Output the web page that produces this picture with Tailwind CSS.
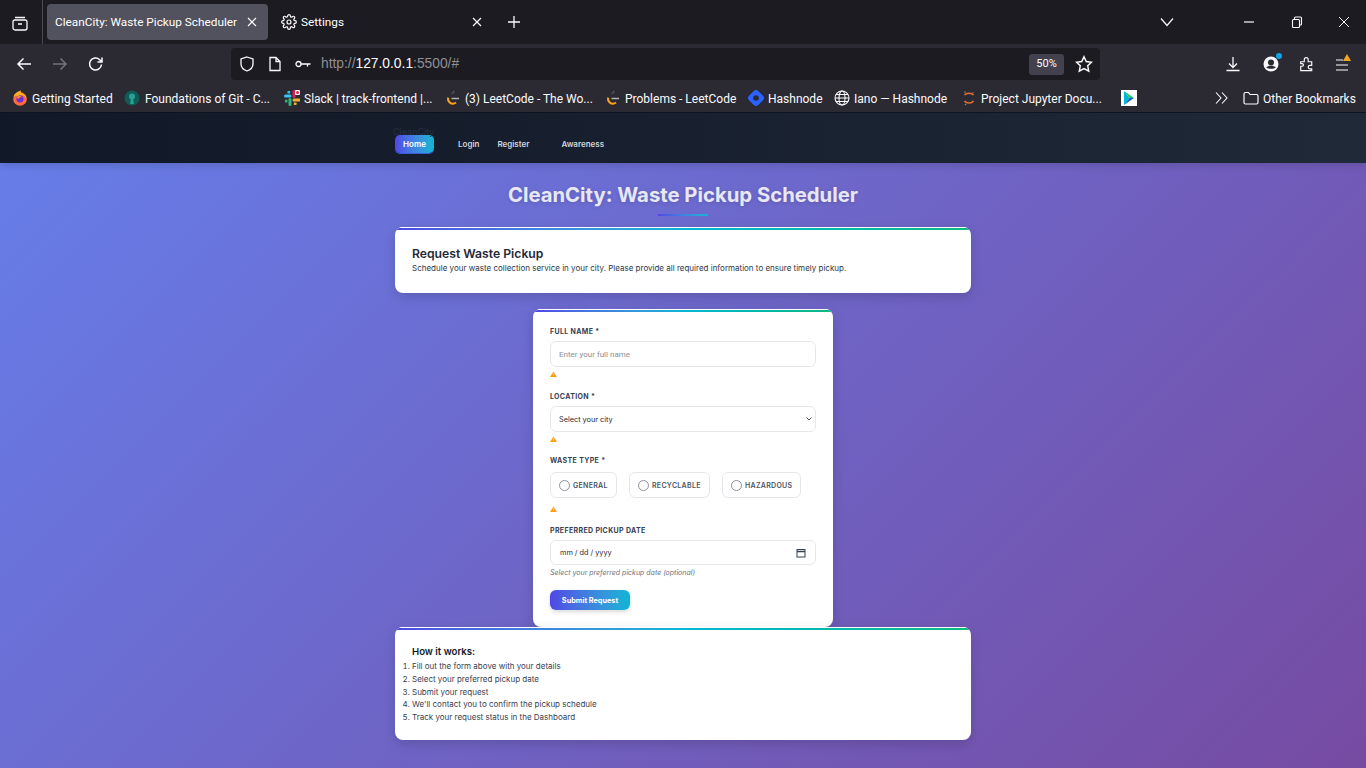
<!DOCTYPE html>
<html lang="en">
  <head>
    <meta charset="UTF-8" />
    <title>CleanCity: Waste Pickup Scheduler</title>
    <script src="https://cdn.jsdelivr.net/npm/@tailwindcss/browser@4"></script>
  </head>
  <body class="w-[1366px] h-[768px] overflow-hidden font-['Inter',sans-serif]">
    <!-- browser chrome -->
    <div class="h-[44px] bg-[#1c1b22] flex items-center text-white font-['Roboto',sans-serif]">
      <div class="w-[43px] h-full flex items-center justify-center border-r border-[#4a4a52] shrink-0">
        <svg class="w-[16px] h-[16px] mt-[1px] -ml-[3px]" viewBox="0 0 16 16" fill="none" stroke="#fbfbfe" stroke-width="1.3"><rect x="1" y="5" width="14" height="10" rx="2"/><path d="M3 2.500h10M6 9h4"/></svg>
      </div>
      <div class="ml-[4px] w-[221px] h-[36px] bg-[#52525e] rounded-[4px] flex items-center pl-[8px] text-[11.8px] whitespace-nowrap shrink-0">
        <span class="w-[182px] pt-[2px]">CleanCity: Waste Pickup Scheduler</span>
        <svg class="w-[10px] h-[10px] ml-[10px] shrink-0" viewBox="0 0 10 10" stroke="#fbfbfe" stroke-width="1.2"><path d="M1 1l8 8M9 1l-8 8"/></svg>
      </div>
      <div class="w-[220px] h-[36px] flex items-center pl-[13px] text-[11.8px] shrink-0">
        <svg class="w-[16px] h-[16px] mr-[4px] shrink-0" viewBox="0 0 24 24" fill="none" stroke="#fbfbfe" stroke-width="1.8"><circle cx="12" cy="12" r="3"/><path d="M19.400 15a1.700 1.700 0 0 0 .3 1.800l.1.1a2 2 0 1 1-2.800 2.800l-.1-.1a1.700 1.700 0 0 0-2.900 1.200V21a2 2 0 1 1-4 0v-.1a1.700 1.700 0 0 0-2.900-1.200l-.1.1a2 2 0 1 1-2.800-2.800l.1-.1a1.700 1.700 0 0 0-1.200-2.900H3a2 2 0 1 1 0-4h.1a1.700 1.700 0 0 0 1.200-2.900l-.1-.1a2 2 0 1 1 2.800-2.800l.1.1a1.700 1.700 0 0 0 1.900.3H9a1.700 1.700 0 0 0 1-1.500V3a2 2 0 1 1 4 0v.1a1.700 1.700 0 0 0 2.900 1.200l.1-.1a2 2 0 1 1 2.800 2.800l-.1.1a1.700 1.700 0 0 0 1.200 2.900h.1a2 2 0 1 1 0 4h-.1a1.700 1.700 0 0 0-1.500 1z"/></svg>
        <span class="pt-[2px]">Settings</span>
        <svg class="w-[10px] h-[10px] ml-auto mr-[6px] shrink-0" viewBox="0 0 10 10" stroke="#fbfbfe" stroke-width="1.2"><path d="M1 1l8 8M9 1l-8 8"/></svg>
      </div>
      <svg class="w-[14px] h-[14px] ml-[19px] shrink-0" viewBox="0 0 14 14" stroke="#fbfbfe" stroke-width="1.3"><path d="M7 1v12M1 7h12"/></svg>
      <svg class="w-[14px] h-[10px] ml-[639px] shrink-0" viewBox="0 0 14 10" fill="none" stroke="#fbfbfe" stroke-width="1.2"><path d="M1 1.500l6 7 6-7"/></svg>
      <svg class="w-[12px] h-[12px] ml-[69px] shrink-0" viewBox="0 0 12 12" stroke="#fbfbfe" stroke-width="1.2"><path d="M1 6h10"/></svg>
      <svg class="w-[12px] h-[12px] ml-[36px] shrink-0" viewBox="0 0 12 12" fill="none" stroke="#fbfbfe" stroke-width="1.1"><rect x="1.500" y="3.500" width="7" height="8" rx="1"/><path d="M3.500 3.500V2a1 1 0 0 1 1-1h5a1 1 0 0 1 1 1v6a1 1 0 0 1-1 1H8.500"/></svg>
      <svg class="w-[12px] h-[12px] ml-[35px] shrink-0" viewBox="0 0 12 12" stroke="#fbfbfe" stroke-width="1"><path d="M1 1l10 10M11 1L1 11"/></svg>
    </div>
    <div class="h-[40px] bg-[#2b2a33] flex items-center text-white">
      <svg class="w-[16px] h-[16px] ml-[16px] shrink-0" viewBox="0 0 16 16" fill="none" stroke="#fbfbfe" stroke-width="1.5"><path d="M15 8H2M7.500 2.500L2 8l5.500 5.500"/></svg>
      <svg class="w-[16px] h-[16px] ml-[20px] shrink-0" viewBox="0 0 16 16" fill="none" stroke="#73737b" stroke-width="1.5"><path d="M1 8h13M8.500 2.500L14 8l-5.500 5.500"/></svg>
      <svg class="w-[16px] h-[16px] ml-[20px] shrink-0" viewBox="0 0 16 16" fill="none" stroke="#fbfbfe" stroke-width="1.5"><path d="M13.500 8.500a6 6 0 1 1-1.800-4.800L14 6M14 1.500V6H9.500"/></svg>
      <div class="ml-[127px] w-[869px] h-[32px] bg-[#1c1b22] rounded-[4px] flex items-center pl-[8px] font-['Liberation_Sans',sans-serif] text-[13.8px] text-[#8f8f94] shrink-0">
        <svg class="w-[16px] h-[16px] shrink-0" viewBox="0 0 16 16" fill="none" stroke="#fbfbfe" stroke-width="1.3"><path d="M8 1l6 2v5c0 3.500-2.500 5.700-6 7-3.500-1.300-6-3.500-6-7V3z"/></svg>
        <svg class="w-[14px] h-[16px] ml-[13px] shrink-0" viewBox="0 0 14 16" fill="none" stroke="#fbfbfe" stroke-width="1.3"><path d="M2 1.500h6l4 4V14.500H2zM8 1.500V5.500h4"/></svg>
        <svg class="w-[16px] h-[10px] ml-[13px] shrink-0" viewBox="0 0 16 10" fill="none" stroke="#fbfbfe" stroke-width="1.3"><circle cx="3.500" cy="5" r="2.500"/><path d="M6 5h9.500M12.500 5v2.500"/></svg>
        <span class="ml-[10px] pt-[1px]">http://<span class="text-[#fbfbfe]">127.0.0.1</span>:5500/#</span>
        <div class="ml-auto w-[35px] h-[21px] bg-[#42414d] rounded-[3px] flex items-center justify-center text-[11px] text-[#fbfbfe] font-['Roboto',sans-serif]">50%</div>
        <svg class="w-[18px] h-[18px] ml-[11px] mr-[7px] shrink-0" viewBox="0 0 16 16" fill="none" stroke="#fbfbfe" stroke-width="1.3"><path d="M8 1.500l2 4.300 4.700.6-3.400 3.200.9 4.700L8 12l-4.200 2.300.9-4.700L1.300 6.400 6 5.800z"/></svg>
      </div>
      <svg class="w-[16px] h-[16px] ml-[125px] shrink-0" viewBox="0 0 16 16" fill="none" stroke="#fbfbfe" stroke-width="1.3"><path d="M8 1v10M4 7.500L8 11.500l4-4M1.500 14.500h13"/></svg>
      <div class="relative ml-[22px] w-[16px] h-[16px] shrink-0">
        <svg class="w-[16px] h-[16px]" viewBox="0 0 16 16"><circle cx="8" cy="8" r="7.500" fill="#fbfbfe"/><circle cx="8" cy="6.500" r="3" fill="#2b2a33"/><path d="M3.200 11.500C5 9.300 11 9.300 12.800 11.500 11 13.300 5 13.300 3.200 11.500z" fill="#2b2a33"/></svg>
        <span class="absolute -top-[3px] -right-[3px] w-[6px] h-[6px] rounded-full bg-[#0ea5e9]"></span>
      </div>
      <svg class="w-[15px] h-[16px] ml-[20px] shrink-0" viewBox="0 0 16 18" fill="none" stroke="#fbfbfe" stroke-width="1.3"><path d="M1.500 6.500h4V4a2.200 2.200 0 0 1 4.400 0v2.500h4v4h-2a2 2 0 0 0 0 4h2v2H1.500v-5H3a1.500 1.500 0 0 0 0-3H1.500z"/></svg>
      <div class="relative ml-[22px] w-[12px] h-[12px] mt-[2px] shrink-0">
        <svg class="w-[12px] h-[12px]" viewBox="0 0 12 12" stroke="#fbfbfe" stroke-width="1.2"><path d="M0 1h7M0 6h12M0 11h12"/></svg>
        <span class="absolute -top-[5px] -right-[3px] w-0 h-0 border-l-[4px] border-r-[4px] border-b-[7px] border-l-transparent border-r-transparent border-b-[#f5a623]"></span>
      </div>
    </div>
    <div class="h-[28px] bg-[#2b2a33] flex items-center text-[#fbfbfe] text-[12px] whitespace-nowrap font-['Roboto',sans-serif]">
      <svg class="w-[16px] h-[16px] ml-[12px] mr-[4px] shrink-0" viewBox="0 0 16 16"><circle cx="8" cy="9" r="6.800" fill="#ff6b3d"/><path d="M1.500 7C2 4 5 1.500 9 .5c-.5 1.500 0 2 1 2.500 2.500 1 4.500 3 4.700 6C13 5.500 9 4 6 6 4 5.500 2.500 6 1.500 7z" fill="#ffb01f"/><circle cx="8" cy="9" r="3.600" fill="#6b2fd9"/><path d="M5 7c1.500-1.500 4-1 5 .5C8.500 7 6.500 7.500 6.500 9 5.500 8.500 5 8 5 7z" fill="#ff9a2e"/></svg>
      <span class="w-[81px] pt-[2px]">Getting Started</span>
      <svg class="w-[16px] h-[16px] ml-[11px] mr-[5px] shrink-0" viewBox="0 0 16 16"><circle cx="8" cy="8" r="7.500" fill="#0f5c56"/><circle cx="8" cy="6.500" r="3" fill="#2aa198"/><path d="M6.800 8h2.400l.6 6H6.200z" fill="#2aa198"/></svg>
      <span class="w-[126px] pt-[2px]">Foundations of Git - C...</span>
      <svg class="w-[16px] h-[16px] ml-[13px] mr-[4px] shrink-0" viewBox="0 0 16 16"><path d="M1.500 7.500h4.500a1.400 1.400 0 0 0 0-3H1.500a1.500 1.500 0 0 0 0 3z" fill="#36c5f0"/><path d="M4.500 1h1.700v2.500H4.500a1.250 1.250 0 0 1 0-2.500z" fill="#36c5f0"/><path d="M8.500 1.500v5a1.400 1.400 0 0 0 3 0v-5a1.500 1.500 0 0 0-3 0z" fill="#e01e5a"/><rect x="11" y="0" width="5" height="5" rx="1" fill="#fff"/><rect x="12" y="1" width="3" height="3" rx="1.500" fill="#e01e5a"/><path d="M15 8.500h-5a1.400 1.400 0 0 0 0 3h5a1.500 1.500 0 0 0 0-3z" fill="#ecb22e"/><path d="M11.500 15H9.800v-2.500h1.700a1.250 1.250 0 0 1 0 2.500z" fill="#ecb22e"/><path d="M7.500 14.500v-5a1.400 1.400 0 0 0-3 0v5a1.500 1.500 0 0 0 3 0z" fill="#2eb67d"/><path d="M1 11.500V9.800h2.500v1.700a1.250 1.250 0 0 1-2.500 0z" fill="#2eb67d"/></svg>
      <span class="w-[129px] pt-[2px]">Slack | track-frontend |...</span>
      <svg class="w-[16px] h-[16px] ml-[12px] mr-[4px] shrink-0" viewBox="0 0 16 16" fill="none" stroke-width="2"><path d="M9.500 1L3.500 7.500" stroke="#4a4a4a"/><path d="M3.500 7.500c-1 1.500-.5 3 .8 4.500 1.700 2 4.700 2.300 6.700.5" stroke="#f89f1b"/><path d="M3.500 7.500L7 4" stroke="#2a2a2a"/><path d="M6.500 8.500H14" stroke="#b3b3b3" stroke-width="1.500"/></svg>
      <span class="w-[128px] pt-[2px]">(3) LeetCode - The Wo...</span>
      <svg class="w-[16px] h-[16px] ml-[12px] mr-[4px] shrink-0" viewBox="0 0 16 16" fill="none" stroke-width="2"><path d="M9.500 1L3.500 7.500" stroke="#4a4a4a"/><path d="M3.500 7.500c-1 1.500-.5 3 .8 4.500 1.700 2 4.700 2.300 6.700.5" stroke="#f89f1b"/><path d="M3.500 7.500L7 4" stroke="#2a2a2a"/><path d="M6.500 8.500H14" stroke="#b3b3b3" stroke-width="1.500"/></svg>
      <span class="w-[110px] pt-[2px]">Problems - LeetCode</span>
      <svg class="w-[16px] h-[16px] ml-[13px] mr-[4px] shrink-0" viewBox="0 0 16 16"><path fill="#2962ff" fill-rule="evenodd" d="M1.200 5.500L5.500 1.200a3.500 3.500 0 0 1 5 0l4.300 4.300a3.500 3.500 0 0 1 0 5l-4.300 4.300a3.500 3.500 0 0 1-5 0l-4.300-4.300a3.500 3.500 0 0 1 0-5zM8 5.200a2.800 2.800 0 1 0 0 5.600 2.800 2.800 0 0 0 0-5.600z"/></svg>
      <span class="w-[53px] pt-[2px]">Hashnode</span>
      <svg class="w-[16px] h-[16px] ml-[13px] mr-[4px] shrink-0" viewBox="0 0 16 16" fill="none" stroke="#fbfbfe" stroke-width="1.100"><circle cx="8" cy="8" r="7"/><ellipse cx="8" cy="8" rx="3" ry="7"/><path d="M1 8h14M2 4.500h12M2 11.500h12"/></svg>
      <span class="w-[94px] pt-[2px]">Iano — Hashnode</span>
      <svg class="w-[16px] h-[16px] ml-[13px] mr-[4px] shrink-0" viewBox="0 0 16 16" fill="none" stroke="#e46e2e" stroke-width="1.500"><path d="M3.500 5C5 2.500 11 2.500 12.500 5M3.500 11c1.500 2.500 7.500 2.500 9 0"/><circle cx="4" cy="2" r=".8" fill="#8a8a8a" stroke="none"/><circle cx="12" cy="2.500" r=".6" fill="#8a8a8a" stroke="none"/><circle cx="4.500" cy="14.500" r=".8" fill="#8a8a8a" stroke="none"/></svg>
      <span class="w-[118px] pt-[2px]">Project Jupyter Docu...</span>
      <svg class="w-[16px] h-[16px] ml-[22px] shrink-0" viewBox="0 0 16 16"><rect width="16" height="16" fill="#fff"/><path d="M3 1v14l5.500-7z" fill="#00b8d4"/><path d="M3 1l10 7H8.500z" fill="#22c55e"/><path d="M3 15l10-7H8.500z" fill="#1565c0"/></svg>
      <svg class="w-[13px] h-[12px] ml-[78px] shrink-0" viewBox="0 0 13 12" fill="none" stroke="#fbfbfe" stroke-width="1.100"><path d="M1 .5l5 5.500-5 5.500M7 .5l5 5.500-5 5.500"/></svg>
      <svg class="w-[16px] h-[14px] ml-[15px] mr-[4px] shrink-0" viewBox="0 0 16 14" fill="none" stroke="#fbfbfe" stroke-width="1.200"><path d="M1 3a1.500 1.500 0 0 1 1.500-1.500h3L7 3.500h6.500A1.500 1.500 0 0 1 15 5v6.500a1.500 1.500 0 0 1-1.500 1.500h-11A1.500 1.500 0 0 1 1 11.500z"/></svg>
      <span class="w-[92px] pt-[2px]">Other Bookmarks</span>
    </div>

    <!-- page, rendered at 50% -->
    <div class="h-[656px] overflow-hidden bg-linear-[135deg] from-[#667eea] to-[#764ba2]">
      <nav class="relative h-[51px] bg-linear-to-r from-[#111827] to-[#1f2937] border-t border-[#0d1420] shadow-[0_2px_8px_rgba(0,0,0,0.15)]">
        <div class="w-[576px] mx-auto">
          <div class="absolute top-[14px] -ml-[2px] text-[9px] text-[#253042] leading-none">CleanCity</div>
          <div class="flex items-center pt-[22px] text-[8px] font-semibold text-[#d1d5db]">
            <a class="w-[39px] h-[18px] rounded-[5px] bg-linear-to-r from-[#4f46e5] to-[#06b6d4] text-white flex items-center justify-center shadow-[0_1px_0_#3b5bdb]">Home</a>
            <a class="ml-[24px]">Login</a>
            <a class="ml-[18px]">Register</a>
            <a class="ml-[32px]">Awareness</a>
          </div>
        </div>
      </nav>
      <main class="flex flex-col items-center">
        <h1 class="mt-[18px] text-[20.3px] leading-[28px] font-bold text-white/85 [text-shadow:0_1px_4px_rgba(0,0,0,0.15)]">CleanCity: Waste Pickup Scheduler</h1>
        <div class="mt-[5px] w-[50px] h-[2px] bg-linear-to-r from-[#4f46e5] to-[#06b6d4]"></div>
        <section class="relative overflow-hidden mt-[11px] w-[576px] h-[66px] bg-white rounded-[8px] shadow-[0_4px_12px_rgba(0,0,0,0.15)] pl-[17px] pt-[19px]">
          <div class="absolute top-0 inset-x-0 h-[3px] bg-linear-to-r from-[#4f46e5] via-[#06b6d4] to-[#10b981] border-t border-white"></div>
          <h2 class="text-[12.2px] leading-[15px] font-semibold text-[#1f2937]">Request Waste Pickup</h2>
          <p class="mt-[1px] text-[8px] leading-[12px] text-[#2d3748]">Schedule your waste collection service in your city. Please provide all required information to ensure timely pickup.</p>
        </section>
        <form class="relative overflow-hidden mt-[16px] w-[300px] h-[318px] bg-white rounded-[8px] shadow-[0_4px_12px_rgba(0,0,0,0.15)] px-[17px] pt-[18px]">
          <div class="absolute top-0 inset-x-0 h-[3px] bg-linear-to-r from-[#4f46e5] via-[#06b6d4] to-[#10b981] border-t border-white"></div>
          <label class="block text-[7px] leading-[9px] font-bold tracking-[0.35px] text-[#374151]">FULL NAME *</label>
          <div class="mt-[5px] h-[26px] w-[266px] border border-[#e5e7eb] rounded-[6px] flex items-center pl-[8px] pt-[1px] text-[8px] text-[#8a8f98] font-['Roboto',sans-serif]">Enter your full name</div>
          <div class="mt-[2px] h-[11px] text-[7px] leading-[11px] text-[#f59e0b]">⚠</div>
          <label class="block mt-[12px] text-[7px] leading-[9px] font-bold tracking-[0.35px] text-[#374151]">LOCATION *</label>
          <div class="mt-[5px] h-[26px] w-[266px] border border-[#e5e7eb] rounded-[6px] flex items-center justify-between pl-[8px] pr-[3px] text-[7.3px] text-[#1f2937]">
            <span class="pt-[2px]">Select your city</span>
            <svg class="w-[6px] h-[4px]" viewBox="0 0 6 4" fill="none" stroke="#4b5563" stroke-width="1"><path d="M.5.500l2.500 2.500 2.500-2.500"/></svg>
          </div>
          <div class="mt-[2px] h-[11px] text-[7px] leading-[11px] text-[#f59e0b]">⚠</div>
          <label class="block mt-[11px] text-[7px] leading-[9px] font-bold tracking-[0.35px] text-[#374151]">WASTE TYPE *</label>
          <div class="mt-[7px] flex gap-[12px]">
            <div class="h-[26px] w-[67px] border border-[#e5e7eb] rounded-[6px] flex items-center pl-[8px] gap-[3px] text-[7px] font-semibold tracking-[0.3px] text-[#4b5563]"><span class="w-[11px] h-[11px] rounded-full border border-[#8f8f9d]"></span><span class="pt-[2px]">GENERAL</span></div>
            <div class="h-[26px] w-[81px] border border-[#e5e7eb] rounded-[6px] flex items-center pl-[8px] gap-[3px] text-[7px] font-semibold tracking-[0.3px] text-[#4b5563]"><span class="w-[11px] h-[11px] rounded-full border border-[#8f8f9d]"></span><span class="pt-[2px]">RECYCLABLE</span></div>
            <div class="h-[26px] w-[79px] border border-[#e5e7eb] rounded-[6px] flex items-center pl-[8px] gap-[3px] text-[7px] font-semibold tracking-[0.3px] text-[#4b5563]"><span class="w-[11px] h-[11px] rounded-full border border-[#8f8f9d]"></span><span class="pt-[2px]">HAZARDOUS</span></div>
          </div>
          <div class="mt-[6px] h-[11px] text-[7px] leading-[11px] text-[#f59e0b]">⚠</div>
          <label class="block mt-[11px] text-[7px] leading-[9px] font-bold tracking-[0.35px] text-[#374151]">PREFERRED PICKUP DATE</label>
          <div class="mt-[5px] h-[25px] w-[266px] border border-[#e5e7eb] rounded-[6px] flex items-center justify-between pl-[9px] pr-[9px] text-[7.3px] text-[#1f2937]">
            <span class="pt-[1px]">mm / dd / yyyy</span>
            <svg class="w-[10px] h-[10px]" viewBox="0 0 10 10" fill="none" stroke="#374151" stroke-width="1"><rect x="1" y="1.500" width="8" height="7.500"/><path d="M1 3.500h8" stroke-width="1.500"/></svg>
          </div>
          <p class="mt-[3px] text-[7px] leading-[10px] italic text-[#6b7280]">Select your preferred pickup date (optional)</p>
          <button type="button" class="block mt-[12px] pt-[2px] w-[80px] h-[20px] rounded-[6px] bg-linear-to-r from-[#4f46e5] to-[#06b6d4] text-white text-[7.3px] font-bold shadow-[0_2px_4px_rgba(0,0,0,0.15)]">Submit Request</button>
        </form>
        <section class="relative overflow-hidden w-[576px] h-[113px] bg-white rounded-[8px] shadow-[0_4px_12px_rgba(0,0,0,0.15)] pl-[17px] pt-[18px]">
          <div class="absolute top-0 inset-x-0 h-[3px] bg-linear-to-r from-[#4f46e5] via-[#06b6d4] to-[#10b981] border-t border-white"></div>
          <h3 class="text-[9.6px] leading-[13px] font-semibold text-[#111827]">How it works:</h3>
          <ol class="mt-[2px] list-decimal text-[8px] leading-[12.800px] text-[#374151]">
            <li>Fill out the form above with your details</li>
            <li>Select your preferred pickup date</li>
            <li>Submit your request</li>
            <li>We'll contact you to confirm the pickup schedule</li>
            <li>Track your request status in the Dashboard</li>
          </ol>
        </section>
      </main>
    </div>
  </body>
</html>
